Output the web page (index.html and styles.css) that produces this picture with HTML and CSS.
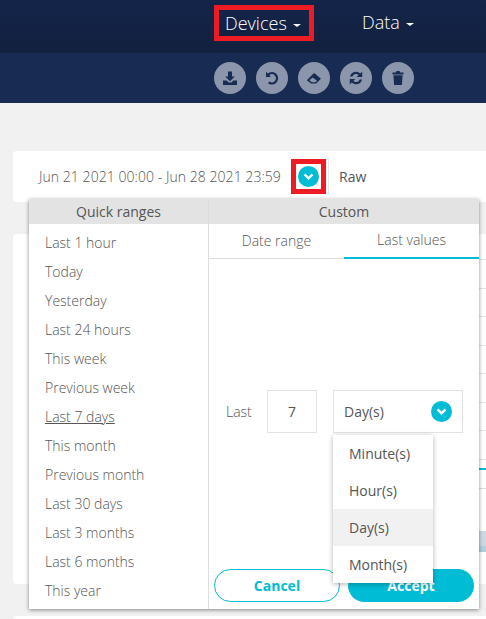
FILE: index.html
```html
<!DOCTYPE html>
<html lang="en">
<head>
  <meta charset="UTF-8" />
  <title>Devices</title>
  <link rel="stylesheet" href="styles.css">
</head>
<body>
  <header class="top-bar">
    <nav class="main-nav">
      <a class="nav-link nav-marked">Devices <span class="caret"></span></a>
      <a class="nav-link">Data <span class="caret"></span></a>
    </nav>
  </header>
  <div class="tool-bar">
    <button class="tool-btn" title="Download">
      <svg viewBox="0 0 16 16"><path d="M6 1.500h4v5h2.800L8 11.200 3.200 6.500H6z"/><path d="M1 10.500h3.600L6.500 12.500h3l1.900-2H15V15H1z"/></svg>
    </button>
    <button class="tool-btn" title="Undo">
      <svg viewBox="0 0 16 16"><path d="M2 1.800l1.700 1.700A6.300 6.300 0 1 1 4 13.200l1.500-1.700a4 4 0 1 0-.2-6.300L7 7H2z"/></svg>
    </button>
    <button class="tool-btn" title="Erase">
      <svg viewBox="0 0 16 16"><path d="M.8 10.300l6.700-6.700a1 1 0 0 1 1.400 0l6 5.200-4.700 4.700H5z"/><path d="M3.400 10.300l2.500 1.900h3.600l1.500-1.500-4.300-3.200z" fill="#8b95ab"/></svg>
    </button>
    <button class="tool-btn" title="Refresh">
      <svg viewBox="0 0 16 16"><path d="M14.200 1.500V7H8.700l2-2A3.900 3.900 0 0 0 4.300 6.600H2A6.200 6.200 0 0 1 12.300 3.400z"/><path d="M1.800 14.500V9h5.500l-2 2a3.900 3.900 0 0 0 6.400-1.600H14A6.200 6.200 0 0 1 3.700 12.600z"/></svg>
    </button>
    <button class="tool-btn" title="Delete">
      <svg viewBox="0 0 16 16"><path d="M2.500 2.600h3.300L6.500 1h3l.7 1.600h3.300v1.900h-11z"/><path d="M3.400 5.300h9.200l-.7 9.700H4.100z"/></svg>
    </button>
  </div>

  <main class="content">
    <section class="filter-card">
      <span class="date-text">Jun 21 2021 00:00 - Jun 28 2021 23:59</span>
      <span class="marked-box">
        <span class="round-btn">
          <svg viewBox="0 0 10 10"><path d="M2 3.400l3 3 3-3"/></svg>
        </span>
      </span>
      <span class="raw-text">Raw</span>
    </section>
    <section class="bg-card">
      <div class="bg-row"></div>
      <div class="bg-row"></div>
      <div class="bg-row"></div>
      <div class="bg-row"></div>
      <div class="bg-row"></div>
      <div class="bg-row"></div>
      <div class="bg-row"></div>
      <div class="bg-row"></div>
      <div class="bg-tab-line"></div>
      <div class="bg-row-end"></div>
      <div class="bg-block"></div>
    </section>
    <section class="bg-card-low"></section>

    <div class="range-popup">
      <div class="quick-col">
        <h4 class="col-title">Quick ranges</h4>
        <ul class="quick-list">
          <li>Last 1 hour</li>
          <li>Today</li>
          <li>Yesterday</li>
          <li>Last 24 hours</li>
          <li>This week</li>
          <li>Previous week</li>
          <li class="current">Last 7 days</li>
          <li>This month</li>
          <li>Previous month</li>
          <li>Last 30 days</li>
          <li>Last 3 months</li>
          <li>Last 6 months</li>
          <li>This year</li>
        </ul>
      </div>
      <div class="custom-col">
        <h4 class="col-title">Custom</h4>
        <div class="tabs">
          <span class="tab">Date range</span>
          <span class="tab tab-active">Last values</span>
        </div>
        <div class="last-row">
          <span class="last-label">Last</span>
          <span class="num-box">7</span>
          <div class="unit-select">
            <span>Day(s)</span>
            <span class="round-btn">
              <svg viewBox="0 0 10 10"><path d="M2 3.400l3 3 3-3"/></svg>
            </span>
          </div>
        </div>
        <div class="actions">
          <button class="btn btn-cancel">Cancel</button>
          <button class="btn btn-accept">Accept</button>
        </div>
        <ul class="unit-menu">
          <li>Minute(s)</li>
          <li>Hour(s)</li>
          <li class="selected">Day(s)</li>
          <li>Month(s)</li>
        </ul>
      </div>
    </div>
  </main>
</body>
</html>
```

FILE: styles.css
```css
* {
  box-sizing: border-box;
}

body {
  margin: 0;
  height: 619px;
  overflow: hidden;
  background: #f1f1f1;
  font-family: "Open Sans", sans-serif;
  font-size: 14px;
  font-weight: 300;
  color: #555;
}

ul {
  list-style: none;
  margin: 0;
  padding: 0;
}

.top-bar {
  height: 53px;
  background: linear-gradient(#14244a, #12213f);
}

.main-nav {
  display: flex;
  padding: 5px 0 0 214px;
}

.nav-link {
  display: block;
  height: 36px;
  line-height: 35px;
  color: #fff;
  font-size: 18px;
  padding: 0 11px;
}

.nav-marked {
  width: 100px;
  border: 5px solid #ed1c24;
  line-height: 26px;
  padding: 0 6px;
  margin-right: 37px;
}

.caret {
  display: inline-block;
  border-top: 3px solid #fff;
  border-left: 4px solid transparent;
  border-right: 4px solid transparent;
  vertical-align: middle;
  margin-left: 2px;
}

.tool-bar {
  height: 50px;
  background: #182b52;
  display: flex;
  gap: 10px;
  padding: 9px 0 0 214px;
}

.tool-btn {
  width: 32px;
  height: 32px;
  border: none;
  border-radius: 50%;
  padding: 8px;
  background: #8b95ab;
}

.tool-btn svg {
  display: block;
  width: 16px;
  height: 16px;
  fill: #182b52;
}

.content {
  position: relative;
  height: 516px;
  padding: 48px 0 0 13px;
}

.filter-card {
  display: flex;
  align-items: center;
  height: 51px;
  background: #fff;
  border-radius: 4px 0 0 4px;
  padding-left: 26px;
}

.date-text {
  width: 252px;
  white-space: nowrap;
  letter-spacing: 0.05px;
}

.marked-box {
  display: flex;
  align-items: center;
  justify-content: center;
  width: 35px;
  height: 35px;
  border: 5px solid #ed1c24;
}

.round-btn {
  display: block;
  width: 21px;
  height: 21px;
  border-radius: 50%;
  background: #00bcd4;
}

.round-btn svg {
  display: block;
  width: 21px;
  height: 21px;
  padding: 4px;
  fill: none;
  stroke: #fff;
  stroke-width: 1.9;
}

.raw-text {
  margin-left: 2px;
  padding-left: 10px;
  height: 35px;
  line-height: 35px;
  font-weight: 400;
  border-left: 1px solid #e8e8e8;
}

.bg-card {
  height: 350px;
  margin-top: 32px;
  padding: 25px 0 0 450px;
  background: #fff;
  border-radius: 4px 0 0 4px;
}

.bg-row {
  height: 28.5px;
  border-bottom: 1px solid #e3e3e3;
}

.bg-row:first-child {
  height: 1px;
}

.bg-tab-line {
  height: 10px;
  border-bottom: 2px solid #00bcd4;
}

.bg-row-end {
  height: 19px;
  border-bottom: 1px solid #ddd;
}

.bg-block {
  height: 21px;
  margin-top: 42px;
  background: linear-gradient(#cdd8e2 15px, #b3d0dc 15px);
}

.bg-card-low {
  height: 20px;
  margin-top: 32px;
  background: #fff;
  border-radius: 4px 0 0 4px;
}

.range-popup {
  position: absolute;
  left: 29px;
  top: 96px;
  width: 450px;
  height: 410px;
  display: flex;
  background: #fff;
  box-shadow: 0 1px 4px rgba(0, 0, 0, 0.45);
}

.quick-col {
  width: 180px;
  border-right: 1px solid #ddd;
}

.custom-col {
  position: relative;
  flex: 1;
  display: flex;
  flex-direction: column;
}

.col-title {
  margin: 0;
  height: 25px;
  line-height: 25px;
  background: #e3e3e3;
  text-align: center;
  font-weight: 400;
  font-size: 14px;
}

.quick-col .col-title {
  margin-right: -1px;
  border-right: 1px solid #ddd;
}

.quick-list {
  padding: 4px 0 0 16px;
}

.quick-list li {
  height: 29px;
  line-height: 29px;
}

.quick-list .current {
  text-decoration: underline;
}

.tabs {
  display: flex;
  height: 35px;
  border-bottom: 1px solid #ddd;
}

.tab {
  flex: 1;
  text-align: center;
  line-height: 34px;
}

.tab-active {
  line-height: 32px;
  border-bottom: 2px solid #00bcd4;
  height: 35px;
}

.last-row {
  display: flex;
  align-items: center;
  margin-top: 131px;
  padding-left: 17px;
}

.last-label {
  width: 41px;
}

.num-box {
  width: 50px;
  height: 43px;
  line-height: 41px;
  text-align: center;
  font-weight: 400;
  border: 1px solid #e3e3e3;
}

.unit-select {
  display: flex;
  align-items: center;
  justify-content: space-between;
  width: 130px;
  height: 43px;
  margin-left: 16px;
  padding: 0 10px;
  font-weight: 400;
  border: 1px solid #e3e3e3;
}

.actions {
  display: flex;
  gap: 8px;
  position: absolute;
  left: 5px;
  bottom: 7px;
}

.btn {
  width: 126px;
  height: 33px;
  border-radius: 17px;
  font-family: inherit;
  font-size: 14px;
  font-weight: 700;
  padding: 0;
}

.btn-cancel {
  background: #fff;
  border: 1px solid #00bcd4;
  color: #00bcd4;
}

.btn-accept {
  background: #00bcd4;
  border: none;
  color: #fff;
}

.unit-menu {
  position: absolute;
  left: 124px;
  top: 236px;
  width: 100px;
  height: 148px;
  font-weight: 400;
  background: #fff;
  box-shadow: 0 1px 5px rgba(0, 0, 0, 0.3);
}

.unit-menu li {
  height: 37px;
  line-height: 37px;
  padding-left: 16px;
}

.unit-menu .selected {
  background: #f1f1f1;
}
```
